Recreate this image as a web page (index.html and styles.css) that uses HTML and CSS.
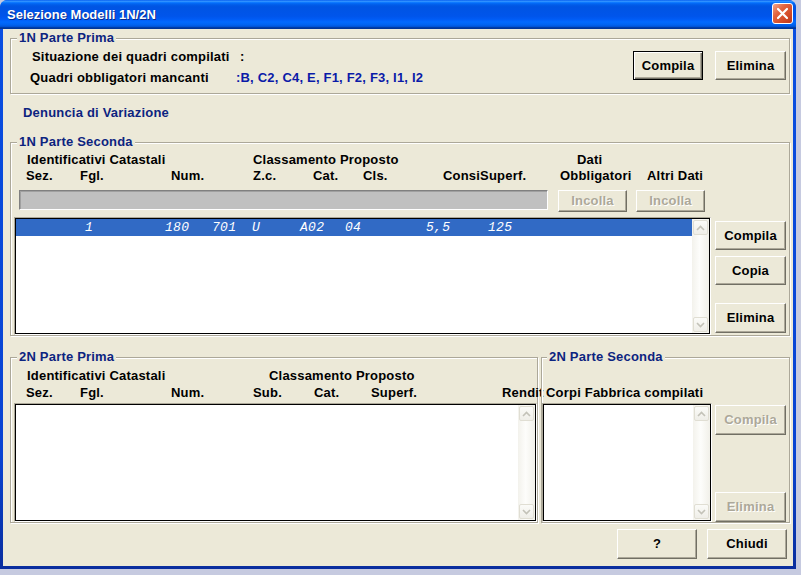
FILE: index.html
```html
<!DOCTYPE html>
<html lang="it">
<head>
<meta charset="utf-8">
<title>Selezione Modelli 1N/2N</title>
<link rel="stylesheet" href="styles.css">
</head>
<body>
<div class="window">
  <header class="titlebar">
    <span class="title">Selezione Modelli 1N/2N</span>
    <span class="close"><svg width="19" height="19" viewBox="0 0 19 19"><path d="M5 5 L14 14 M14 5 L5 14" stroke="#fff" stroke-width="2.2" stroke-linecap="round"/></svg></span>
  </header>
  <div class="client">
    <section class="group g1">
      <div class="legend">1N Parte Prima</div>
      <div class="g1-body">
        <div class="g1-info">
          <div class="info-row r1"><span class="l1">Situazione dei quadri compilati</span><span>:</span></div>
          <div class="info-row r2"><span class="l2">Quadri obbligatori mancanti</span><span class="val">:B, C2, C4, E, F1, F2, F3, I1, I2</span></div>
        </div>
        <div class="g1-btns">
          <button class="btn default w70">Compila</button>
          <button class="btn w71">Elimina</button>
        </div>
      </div>
    </section>

    <div class="denuncia">Denuncia di Variazione</div>

    <section class="group g2">
      <div class="legend">1N Parte Seconda</div>
      <div class="hdr h1">
        <span>Identificativi Catastali</span>
        <span>Classamento Proposto</span>
        <span>Dati</span>
      </div>
      <div class="hdr h2">
        <span>Sez.</span><span>Fgl.</span><span>Num.</span><span>Z.c.</span><span>Cat.</span><span>Cls.</span><span>ConsiSuperf.</span><span>Obbligatori</span><span>Altri Dati</span>
      </div>
      <div class="barrow">
        <div class="bar"></div>
        <button class="btn inc1" disabled>Incolla</button>
        <button class="btn inc2" disabled>Incolla</button>
      </div>
      <div class="listrow">
        <div class="list">
          <div class="list-in">
            <div class="items">
              <div class="sel"><span>1</span><span>180</span><span>701</span><span>U</span><span>A02</span><span>04</span><span>5,5</span><span>125</span></div>
            </div>
            <div class="scroll">
              <div class="sb-btn"><svg width="9" height="6" viewBox="0 0 9 6"><path d="M1 5 L4.5 1.5 L8 5" fill="none" stroke="#c3c2b8" stroke-width="1.6"/></svg></div>
              <div class="sb-btn"><svg width="9" height="6" viewBox="0 0 9 6"><path d="M1 1 L4.5 4.5 L8 1" fill="none" stroke="#c3c2b8" stroke-width="1.6"/></svg></div>
            </div>
          </div>
        </div>
        <div class="side2">
          <button class="btn b-comp">Compila</button>
          <button class="btn b-copia">Copia</button>
          <button class="btn b-elim">Elimina</button>
        </div>
      </div>
    </section>

    <div class="lower">
      <section class="group g3">
        <div class="legend">2N Parte Prima</div>
        <div class="hdr h1">
          <span>Identificativi Catastali</span>
          <span>Classamento Proposto</span>
        </div>
        <div class="hdr h2">
          <span>Sez.</span><span>Fgl.</span><span>Num.</span><span>Sub.</span><span>Cat.</span><span>Superf.</span><span>Rendit</span>
        </div>
        <div class="listrow">
          <div class="list">
            <div class="list-in">
              <div class="items"></div>
              <div class="scroll">
                <div class="sb-btn"><svg width="9" height="6" viewBox="0 0 9 6"><path d="M1 5 L4.5 1.5 L8 5" fill="none" stroke="#c3c2b8" stroke-width="1.6"/></svg></div>
                <div class="sb-btn"><svg width="9" height="6" viewBox="0 0 9 6"><path d="M1 1 L4.5 4.5 L8 1" fill="none" stroke="#c3c2b8" stroke-width="1.6"/></svg></div>
              </div>
            </div>
          </div>
        </div>
      </section>

      <section class="group g4">
        <div class="legend">2N Parte Seconda</div>
        <div class="corpi"><span class="corpi-lbl">Corpi Fabbrica compilati</span></div>
        <div class="listrow">
          <div class="list">
            <div class="list-in">
              <div class="items"></div>
              <div class="scroll">
                <div class="sb-btn"><svg width="9" height="6" viewBox="0 0 9 6"><path d="M1 5 L4.5 1.5 L8 5" fill="none" stroke="#c3c2b8" stroke-width="1.6"/></svg></div>
                <div class="sb-btn"><svg width="9" height="6" viewBox="0 0 9 6"><path d="M1 1 L4.5 4.5 L8 1" fill="none" stroke="#c3c2b8" stroke-width="1.6"/></svg></div>
              </div>
            </div>
          </div>
          <div class="side4">
            <button class="btn" disabled>Compila</button>
            <button class="btn" disabled>Elimina</button>
          </div>
        </div>
      </section>
    </div>

    <div class="footer">
      <button class="btn w80">?</button>
      <button class="btn w80">Chiudi</button>
    </div>
  </div>
</div>
</body>
</html>
```

FILE: styles.css
```css
* { box-sizing: border-box; }

body {
  margin: 0;
  width: 801px;
  height: 575px;
  overflow: hidden;
  background: #c6cae0;
  font-family: "Liberation Sans", Arial, sans-serif;
  font-size: 13px;
  font-weight: bold;
  line-height: 14px;
  letter-spacing: 0.2px;
  color: #000;
}

.window {
  width: 796px;
  height: 569px;
  display: flex;
  flex-direction: column;
  background: linear-gradient(to bottom, #0a4fe2, #0843d2 80%, #0a2e9e);
  border-radius: 8px 8px 0 0;
}

.titlebar {
  height: 29px;
  flex: none;
  display: flex;
  align-items: flex-start;
  padding: 0 3px 0 7px;
  border-radius: 7px 7px 0 0;
  background: linear-gradient(to bottom, #0058ee 0%, #3593ff 4%, #288eff 6%, #127dff 8%, #036ffc 10%, #0262ee 14%, #0057e5 20%, #0054e3 24%, #0055eb 56%, #005bf5 66%, #026afe 76%, #0062ef 86%, #0052d6 92%, #0040ab 94%, #003092 100%);
}

.title {
  flex: 1;
  margin-top: 7px;
  color: #fff;
  letter-spacing: 0;
  line-height: 15px;
  text-shadow: 1px 1px 0 #0a2a8a;
}

.close {
  margin-top: 3px;
  width: 21px;
  height: 21px;
  border: 1px solid #fff;
  border-radius: 3px;
  background: linear-gradient(135deg, #f2a68c 0%, #e3643f 35%, #d24a27 70%, #bb361b 100%);
  display: flex;
  align-items: center;
  justify-content: center;
}

.client {
  flex: 1;
  margin: 0 3px 3px;
  background: #ece9d8;
  padding: 0 3px 0 7px;
  display: flex;
  flex-direction: column;
}

.group {
  flex: none;
  border: 1px solid #aca899;
  box-shadow: inset 1px 1px 0 #fff, 1px 1px 0 #fff;
  display: flex;
  flex-direction: column;
}

.legend {
  align-self: flex-start;
  margin: -8px 0 0 6px;
  padding: 0 2px;
  height: 14px;
  background: #ece9d8;
  color: #0c2480;
  white-space: nowrap;
}

/* group 1 */
.g1 { margin-top: 9px; height: 56px; }
.g1-body {
  display: flex;
  justify-content: space-between;
  padding: 5px 3px 0 0;
}
.info-row { display: flex; height: 14px; white-space: nowrap; }
.r1 { padding-left: 21px; margin-bottom: 7px; }
.r2 { padding-left: 19px; }
.l1 { width: 208px; }
.l2 { width: 206px; }
.val { color: #0a1aa8; }
.g1-btns { display: flex; gap: 12px; margin-top: 1px; }

.denuncia {
  flex: none;
  margin-top: 12px;
  padding-left: 13px;
  height: 14px;
  color: #0c2480;
}

/* buttons */
.btn {
  height: 29px;
  padding: 0;
  background: #ece9d8;
  border: 1px solid;
  border-color: #fff #716f64 #716f64 #fff;
  box-shadow: inset -1px -1px 0 #aca899;
  font: inherit;
  letter-spacing: inherit;
  color: #000;
  width: 71px;
}
.btn.default {
  border: 1px solid #000;
  box-shadow: inset 1px 1px 0 #fff, inset -1px -1px 0 #716f64, inset -2px -2px 0 #aca899;
}
.btn:disabled {
  color: #aca899;
  text-shadow: 1px 1px 0 #fff;
}
.w70 { width: 70px; }
.w71 { width: 71px; }
.w80 { width: 80px; height: 30px; }

/* headers */
.hdr { display: grid; white-space: nowrap; height: 14px; }
.g2 { margin-top: 22px; height: 194px; }
.g2 .h1 { margin-top: 4px; padding-left: 16px; grid-template-columns: 226px 324px auto; }
.g2 .h2 { margin-top: 2px; padding-left: 15px; grid-template-columns: 54px 91px 82px 60px 50px 80px 117px 87px auto; }

.barrow {
  display: flex;
  align-items: flex-start;
  margin-top: 7px;
  padding-left: 8px;
  height: 22px;
}
.bar {
  width: 529px;
  height: 20px;
  background: #c0c0c0;
  border: 1px solid;
  border-color: #808080 #fff #fff #808080;
  box-shadow: inset 1px 1px 0 #a0a0a0;
}
.inc1 { margin-left: 10px; width: 69px; height: 22px; }
.inc2 { margin-left: 9px; width: 69px; height: 22px; }

.listrow { display: flex; margin-top: 5px; padding-left: 3px; }

.list {
  display: flex;
  border: 1px solid;
  border-color: #aca899 #fff #fff #aca899;
}
.list-in {
  flex: 1;
  display: flex;
  border: 1px solid #000;
  background: #fff;
}
.items { flex: 1; }
.sel {
  height: 17px;
  background: #316ac5;
  color: #fff;
  font: italic normal 13px/17px "Liberation Mono", "Courier New", monospace;
  letter-spacing: 0.3px;
  display: grid;
  grid-template-columns: 80px 47px 40px 48px 45px 81px 62px auto;
  padding-left: 69px;
  white-space: pre;
}

.scroll {
  width: 17px;
  display: flex;
  flex-direction: column;
  justify-content: space-between;
  padding: 1px;
  background: linear-gradient(to right, #f3f2ec, #fdfdfb 45%, #f1f0e9);
}
.sb-btn {
  height: 15px;
  border: 1px solid #e0ded3;
  border-radius: 2px;
  background: linear-gradient(to bottom, #fbfbf8, #efeee8);
  display: flex;
  align-items: center;
  justify-content: center;
}

.g2 .list { width: 697px; height: 118px; }
.side2 { margin-left: 4px; display: flex; flex-direction: column; padding-top: 4px; }
.b-copia { margin-top: 6px; }
.b-elim { margin-top: 18px; height: 30px; }

/* lower groups */
.lower { flex: none; display: flex; gap: 3px; margin-top: 21px; height: 166px; }
.g3 { width: 528px; }
.g4 { width: 249px; }
.g3 .h1 { margin-top: 5px; padding-left: 16px; grid-template-columns: 242px auto; }
.g3 .h2 { margin-top: 3px; padding-left: 15px; grid-template-columns: 54px 91px 82px 61px 57px 131px auto; }
.g3 .listrow { margin-top: 3px; }
.g3 .list { width: 523px; height: 119px; }

.g4 .legend { margin-left: 5px; }
.corpi { margin-top: 22px; padding-left: 4px; height: 14px; white-space: nowrap; }
.g4 .listrow { margin-top: 3px; padding-left: 0; }
.g4 .list { width: 170px; height: 119px; }
.side4 {
  margin-left: 3px;
  display: flex;
  flex-direction: column;
  justify-content: space-between;
  padding-top: 2px;
}
.side4 .btn { height: 30px; }

.footer {
  flex: none;
  display: flex;
  justify-content: flex-end;
  gap: 10px;
  margin-top: 6px;
  padding-right: 3px;
}
```
